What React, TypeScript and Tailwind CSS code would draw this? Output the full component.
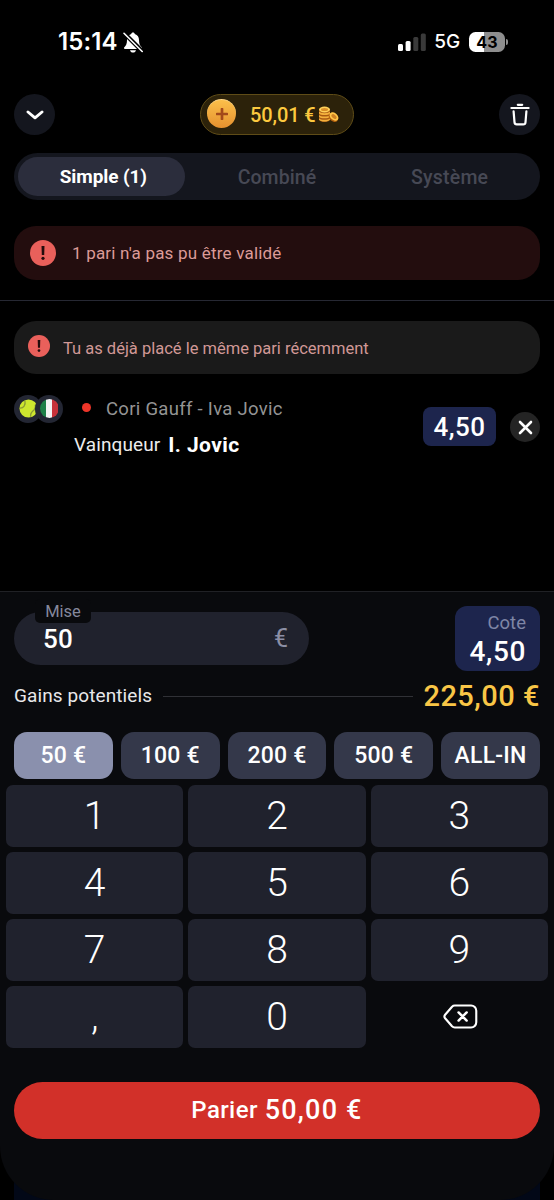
import React from 'react';

const amounts = [
  { label: '50 €', active: true },
  { label: '100 €' },
  { label: '200 €' },
  { label: '500 €' },
  { label: 'ALL-IN' },
];

const keys = ['1', '2', '3', '4', '5', '6', '7', '8', '9', ',', '0'];

const StatusBar: React.FC = () => (
  <div className="flex h-[94px] items-start justify-between pl-[58px] pr-[46px] pt-[28px] font-['Inter',sans-serif] text-white">
    <div className="flex h-7 items-center gap-[5px]">
      <span className="text-[24px] font-semibold leading-7 tracking-[0.1px]">15:14</span>
      <svg className="h-[21px] w-5" viewBox="0 0 20 21" fill="none">
        <path d="M10 .5c-1 0-1.7.7-1.8 1.6C5.300 3 4 5.200 4 8c0 4-1 5.600-2.700 7.300-.6.7-.3 1.700.6 1.700h16.200c.9 0 1.200-1 .6-1.700C17 13.600 16 12 16 8c0-2.800-1.300-5-4.200-5.900C11.700 1.200 11 .5 10 .5z" fill="#fff" />
        <path d="M7 18.200h6c-.4 1.500-1.500 2.300-3 2.300s-2.600-.8-3-2.300z" fill="#fff" />
        <path d="M1.500 1.500 20 20" stroke="#000" strokeWidth="4.200" />
        <path d="M1 1.300 19.200 19.500" stroke="#fff" strokeWidth="1.600" strokeLinecap="round" />
      </svg>
    </div>
    <div className="flex h-7 items-center">
      <svg className="h-[18px] w-[28px]" viewBox="0 0 28 18">
        <rect x="0" y="11" width="5" height="7" rx="1.500" fill="#fff" />
        <rect x="7.600" y="8" width="5" height="10" rx="1.500" fill="#fff" />
        <rect x="15.300" y="4" width="5" height="14" rx="1.500" fill="#3a3a3a" />
        <rect x="22.800" y="0.500" width="5" height="17.500" rx="1.500" fill="#3a3a3a" />
      </svg>
      <span className="ml-[8px] text-[19px] font-medium leading-7 tracking-[-0.1px]">5G</span>
      <div className="ml-[9px] flex h-5 w-[36px] items-center justify-center rounded-[6.500px] bg-linear-to-r from-white from-43% to-[#8e8e8e] to-43% text-[16px] font-bold leading-5 tracking-[0.3px] text-black">
        43
      </div>
      <div className="ml-px h-[6px] w-[2px] rounded-r-full bg-[#8e8e8e]" />
    </div>
  </div>
);

const Coins: React.FC = () => (
  <svg className="h-[17px] w-[21px]" viewBox="0 0 21 17">
    <path d="M1 3v10c0 1.700 2.300 3 5.500 3s5.500-1.300 5.500-3V3z" fill="#a85a12" />
    <path d="M1 12.200c1.600 2.200 9.400 2.200 11 0v1.600c-1.600 2.400-9.400 2.400-11 0zM1 8.900c1.600 2.200 9.400 2.200 11 0v1.800c-1.600 2.200-9.400 2.200-11 0zM1 5.600c1.600 2.200 9.400 2.200 11 0v1.800c-1.600 2.200-9.400 2.200-11 0z" fill="#f3b03c" />
    <ellipse cx="6.500" cy="3.500" rx="5.500" ry="2.900" fill="#ffd159" />
    <ellipse cx="6.500" cy="3.600" rx="3.500" ry="1.500" fill="#d98e28" />
    <ellipse cx="15.400" cy="11.400" rx="5.200" ry="4" transform="rotate(42 15.400 11.400)" fill="#b4620f" />
    <ellipse cx="16" cy="10.500" rx="5" ry="3.500" transform="rotate(42 16 10.500)" fill="#ffc648" />
    <ellipse cx="16" cy="10.500" rx="3" ry="1.800" transform="rotate(42 16 10.500)" fill="#cf8323" />
  </svg>
);

const Header: React.FC = () => (
  <div className="flex h-[41px] items-center justify-between px-3.5">
    <button className="flex size-[41px] items-center justify-center rounded-full bg-[#14161e]">
      <svg className="mt-px h-[10px] w-[18px]" viewBox="0 0 18 10" fill="none">
        <path d="M2 2 9 7.800 16 2" stroke="#fff" strokeWidth="2.900" strokeLinecap="round" strokeLinejoin="round" />
      </svg>
    </button>
    <div className="flex h-[41px] w-[154px] items-center rounded-full border border-[#5f4c17] bg-[#2c220a] pl-1.5">
      <div className="mb-[2px] flex size-[29px] items-center justify-center rounded-full border-t border-[#ffd68a] bg-linear-to-b from-[#fbbf4a] to-[#e5912f]">
        <svg className="size-3" viewBox="0 0 12 12">
          <path d="M6 1v10M1 6h10" stroke="#a3491a" strokeWidth="2.700" strokeLinecap="round" />
        </svg>
      </div>
      <span className="ml-[14px] w-[68px] whitespace-nowrap text-[20px] font-medium leading-6 tracking-[-0.1px] text-[#fcc93f]">50,01 €</span>
      <Coins />
    </div>
    <button className="flex size-[41px] items-center justify-center rounded-full bg-[#14161e]">
      <svg className="h-[23px] w-5" viewBox="0 0 20 23" fill="none" stroke="#fff" strokeWidth="2.200" strokeLinecap="round" strokeLinejoin="round">
        <path d="M1.400 5h17.200M7.800 1.800h4.400" />
        <path d="M3.600 8.300l.9 10.900c.1 1.500.9 2.200 2.300 2.200h6.400c1.400 0 2.200-.7 2.300-2.200l.9-10.900" />
      </svg>
    </button>
  </div>
);

const Tabs: React.FC = () => (
  <div className="mx-3.5 mt-[18px] grid h-[47px] grid-cols-3 items-center rounded-full bg-[#14161e] px-1 text-center text-[19.500px] font-medium leading-6 text-[#474955]">
    <div className="mr-[6px] flex h-[39px] items-center justify-center rounded-full bg-[#2b2d3c] pl-1 pt-px text-[19px] font-bold tracking-[-0.1px] text-white">Simple (1)</div>
    <div className="pt-[2px] tracking-[0.1px]">Combiné</div>
    <div className="pt-[2px] tracking-[0.2px]">Système</div>
  </div>
);

const Alert: React.FC<{ size: string; icon: string }> = ({ size, icon }) => (
  <div className={`flex shrink-0 items-center justify-center rounded-full bg-[#e9605b] ${size}`}>
    <svg className={icon} viewBox="0 0 4 14">
      <path d="M.5 0h3L3.200 9H.8z" fill="#230c0c" />
      <circle cx="2" cy="12.300" r="1.600" fill="#230c0c" />
    </svg>
  </div>
);

const Bet: React.FC = () => (
  <div className="mx-3.5 mt-5 flex">
    <div className="flex h-[29px] items-center">
      <div className="flex size-[28px] items-center justify-center rounded-full bg-[#232633]">
        <svg className="size-[19px]" viewBox="0 0 20 20" fill="none">
          <circle cx="10" cy="10" r="9.500" fill="#cde62f" />
          <path d="M.8 9.500c4 .3 6.500-3 5.400-7.700M12.500 18.800c-1.400-4 1.600-5.500 3.500-7.500 1.200-1.400 1.600-3.500 1.200-5.500" stroke="#8b9a35" strokeWidth="1.400" />
        </svg>
      </div>
      <div className="-ml-[7px] flex size-[28px] items-center justify-center rounded-full bg-[#232633]">
        <div className="flex size-[19px] overflow-hidden rounded-full">
          <div className="flex-1 bg-[#1f8049]" />
          <div className="flex-1 bg-[#f4f4f4]" />
          <div className="flex-1 bg-[#c8323a]" />
        </div>
      </div>
    </div>
    <div className="ml-[11px] pt-[3px]">
      <div className="flex h-6 items-center">
        <div className="mb-1 ml-2 size-[9px] rounded-full bg-[#ee3529]" />
        <span className="ml-[15px] text-[18.500px] leading-6 tracking-[0.300px] text-[#949494]">Cori Gauff - Iva Jovic</span>
      </div>
      <div className="mt-[12px] flex h-6 items-center gap-[8px] text-white">
        <span className="text-[19px] leading-6 tracking-[0.1px] text-[#ececec]">Vainqueur</span>
        <span className="text-[21px] font-bold leading-6 tracking-[0.4px]">I. Jovic</span>
      </div>
    </div>
    <div className="ml-auto mt-[13px] flex h-[39px] items-center gap-[14px]">
      <div className="flex h-[39px] w-[73px] items-center justify-center rounded-[8px] bg-[#1d254d] text-[26px] font-medium leading-8 tracking-[0.5px] text-white">4,50</div>
      <button className="mt-px flex size-[30px] items-center justify-center rounded-full bg-[#242424]">
        <svg className="size-[15px]" viewBox="0 0 15 15">
          <path d="M2 2l11 11M13 2 2 13" stroke="#fff" strokeWidth="2.600" strokeLinecap="round" />
        </svg>
      </button>
    </div>
  </div>
);

const Keypad: React.FC = () => (
  <div className="mx-1.5 mt-1.5 grid grid-cols-3 gap-x-[5px] gap-y-[5.500px]">
    {keys.map((k) => (
      <button key={k} className="flex h-[61.500px] items-center justify-center rounded-[7px] bg-[#20222d] pt-[2px] text-[39px] font-[350] leading-[59px] text-white">
        {k}
      </button>
    ))}
    <button className="flex h-[61.500px] items-center justify-center">
      <svg className="ml-[2px] h-[25px] w-[35px]" viewBox="0 0 36 26" fill="none" stroke="#fff" strokeLinecap="round" strokeLinejoin="round">
        <path d="M12 1.600h17a5.400 5.400 0 0 1 5.400 5.400v12a5.400 5.400 0 0 1-5.400 5.400H12c-1.200 0-2-.4-2.800-1.200L2 14.800c-.9-1.100-.9-2.500 0-3.600L9.200 2.800C10 2 10.800 1.600 12 1.600z" strokeWidth="2.200" />
        <path d="M16 8.800l8.400 8.400M24.400 8.800l-8.400 8.400" strokeWidth="2.600" />
      </svg>
    </button>
  </div>
);

const StakePanel: React.FC = () => (
  <div className="flex-1 bg-[linear-gradient(to_right,#000_14px,#020817_14px,#020817_540px,#000_540px)]">
    <div className="h-full rounded-b-[54px] border-t border-[#202125] bg-[#090a0d]">
      <div className="mx-3.5 flex h-[79px] items-end justify-between pt-3.5">
        <div className="relative mb-1.5 flex h-[53px] w-[295px] items-center justify-between rounded-full bg-[#20222d] pl-[29px] pr-[21px]">
          <div className="absolute -top-[13px] left-[21px] flex h-6 w-[56px] items-center justify-center rounded-[5px] bg-[#090a0d] pt-px text-[16.500px] leading-5 text-[#85889c]">Mise</div>
          <span className="text-[26px] font-medium leading-8 tracking-[0.3px] text-white">50</span>
          <span className="text-[25px] leading-8 text-[#8c8fa5]">€</span>
        </div>
        <div className="flex h-[65px] w-[85px] flex-col items-end rounded-[12px] bg-[#1d254d] pr-[14px] pt-1">
          <span className="text-[18.500px] leading-[26px] text-[#7f86a6]">Cote</span>
          <span className="text-[28px] font-medium leading-[32px] tracking-[0.6px] text-white">4,50</span>
        </div>
      </div>
      <div className="mx-3.5 mt-[7px] flex h-9 items-center">
        <span className="text-[19px] leading-6 tracking-[0.1px] text-[#e8e8ea]">Gains potentiels</span>
        <div className="ml-[11px] mr-[10px] h-px flex-1 bg-[#303136]" />
        <span className="text-[29px] font-medium leading-9 tracking-[0.5px] text-[#f9c646]">225,00 €</span>
      </div>
      <div className="mx-3.5 mt-[18px] grid grid-cols-5 gap-2">
        {amounts.map(({ label, active }) => (
          <button
            key={label}
            className={`flex h-[47px] items-center justify-center whitespace-nowrap rounded-[13px] pt-px text-[23px] font-medium leading-7 tracking-[0.2px] text-white ${active ? 'bg-[#8a90ad]' : 'bg-[#34384a]'}`}
          >
            {label}
          </button>
        ))}
      </div>
      <Keypad />
      <button className="mx-3.5 mt-[34px] flex h-[57px] w-[526px] items-center justify-center gap-[7px] rounded-full bg-[#d23029] text-white">
        <span className="text-[24px] font-medium leading-8 tracking-[0.4px]">Parier</span>
        <span className="text-[27px] font-medium leading-8 tracking-[1.200px]">50,00 €</span>
      </button>
    </div>
  </div>
);

const App: React.FC = () => {
  return (
    <div className="flex h-[1200px] w-[554px] flex-col overflow-hidden bg-black font-['Roboto',sans-serif]">
      <StatusBar />
      <Header />
      <Tabs />
      <div className="mx-3.5 mt-[26px] flex h-[54px] shrink-0 items-center rounded-[22px] bg-[#230d0e] pl-4">
        <Alert size="size-[26px]" icon="h-[14px] w-1" />
        <span className="ml-4 text-[17px] leading-6 tracking-[0.2px] text-[#dc9b98]">1 pari n'a pas pu être validé</span>
      </div>
      <div className="mt-5 h-px shrink-0 bg-[#262833]" />
      <div className="mx-3.5 mt-5 flex h-[53px] shrink-0 items-center rounded-[22px] bg-[#1a1a1a] pl-3.5">
        <Alert size="mb-1 size-[22px]" icon="h-[12px] w-1" />
        <span className="ml-[13px] mt-[2px] text-[16.500px] leading-6 text-[#d19896]">Tu as déjà placé le même pari récemment</span>
      </div>
      <div className="h-[217px] shrink-0">
        <Bet />
      </div>
      <StakePanel />
    </div>
  );
};

export default App;
